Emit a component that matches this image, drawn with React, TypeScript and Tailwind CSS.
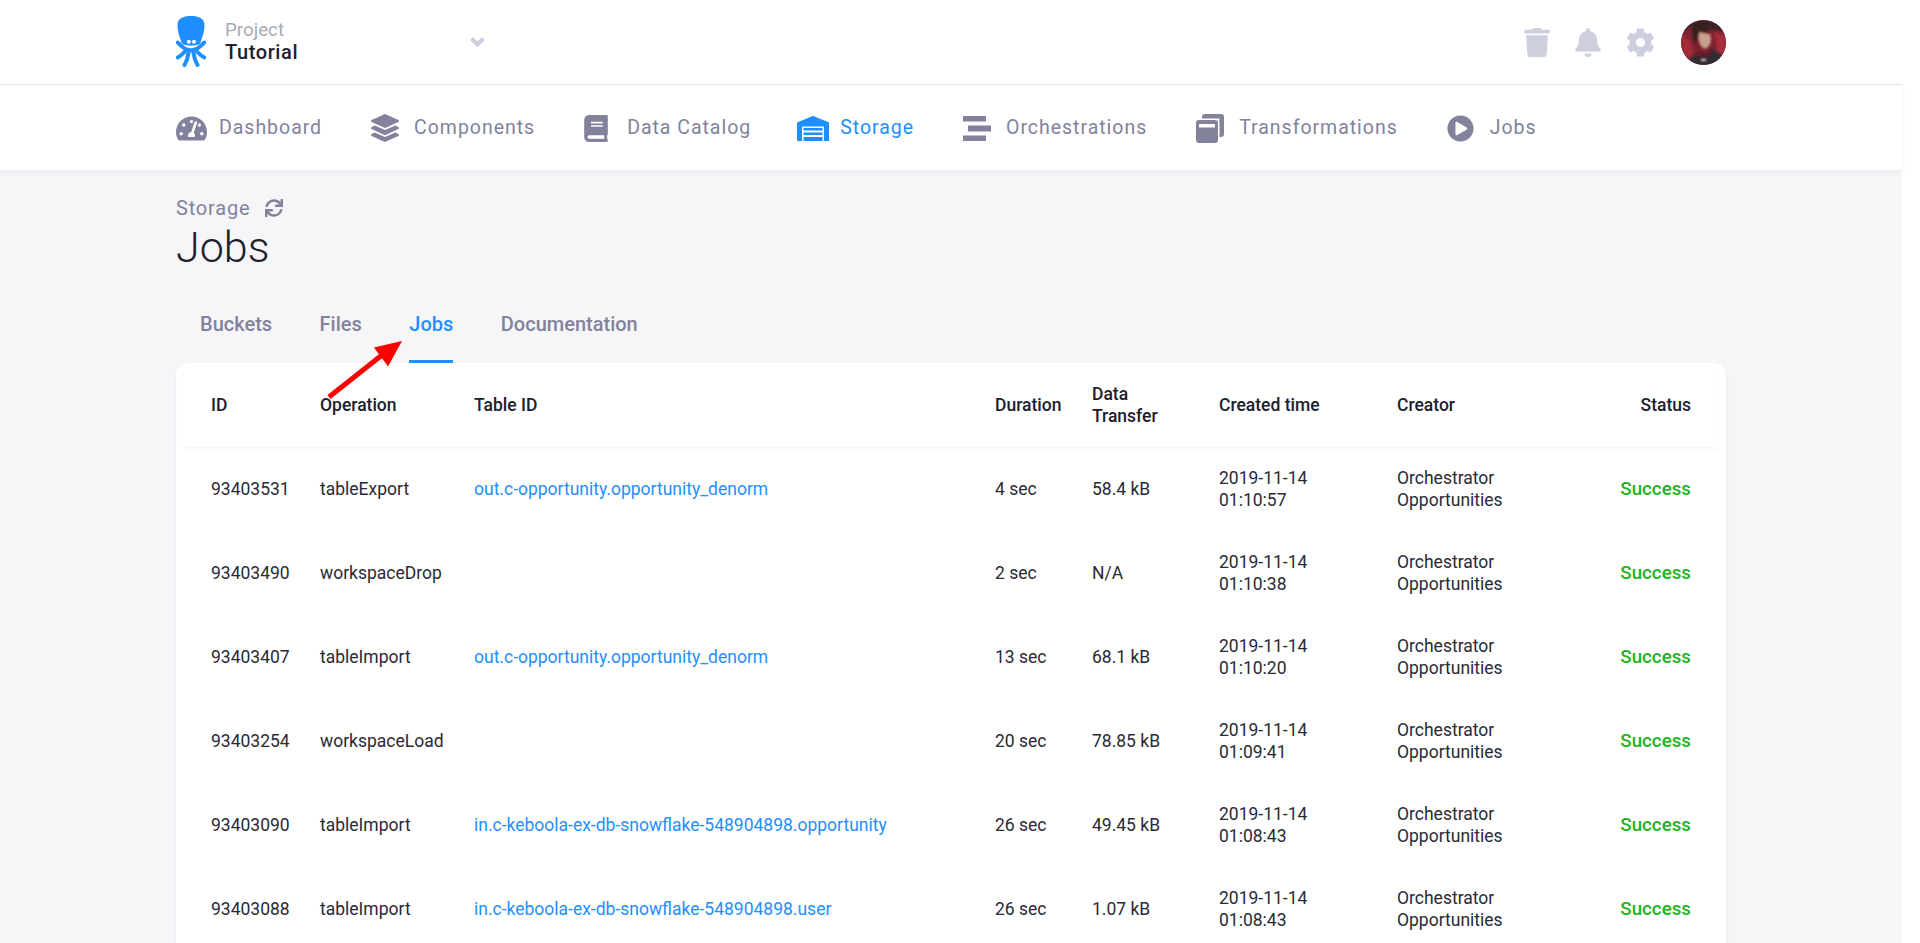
import { FaBell, FaBook, FaCog, FaLayerGroup, FaPlayCircle, FaSync, FaTachometerAlt, FaTrash } from "react-icons/fa";

const jobs = [
  { id: "93403531", op: "tableExport", table: "out.c-opportunity.opportunity_denorm", dur: "4 sec", size: "58.4 kB", time: "01:10:57" },
  { id: "93403490", op: "workspaceDrop", table: "", dur: "2 sec", size: "N/A", time: "01:10:38" },
  { id: "93403407", op: "tableImport", table: "out.c-opportunity.opportunity_denorm", dur: "13 sec", size: "68.1 kB", time: "01:10:20" },
  { id: "93403254", op: "workspaceLoad", table: "", dur: "20 sec", size: "78.85 kB", time: "01:09:41" },
  { id: "93403090", op: "tableImport", table: "in.c-keboola-ex-db-snowflake-548904898.opportunity", dur: "26 sec", size: "49.45 kB", time: "01:08:43" },
  { id: "93403088", op: "tableImport", table: "in.c-keboola-ex-db-snowflake-548904898.user", dur: "26 sec", size: "1.07 kB", time: "01:08:43" },
];

function Logo() {
  return (
    <svg viewBox="0 0 30 51" className="mb-[2px] h-[51px] w-[30px] text-[#1f8fff]" fill="currentColor">
      <path d="M1.500 9C1.500 2.500 7 0 15 0s13.500 2.500 13.500 9c0 8-3 13-4 18-2 3.500-17 3.500-19 0-1-5-4-10-4-18z" />
      <circle cx="12.800" cy="25.800" r="2" fill="#fff" />
      <circle cx="18" cy="25.800" r="2" fill="#fff" />
      <g fill="none" stroke="currentColor" strokeLinecap="round">
        <path d="M1.800 26.500Q15 42 28.200 26.500" strokeWidth="4" />
        <path d="M9 35.500Q5.500 39.500 1.800 41.500M21 35.500Q24.500 39.500 28.200 41.500" strokeWidth="4" />
        <path d="M12.500 37Q11.500 44 8.500 49M17.500 37Q18.500 44 21.500 49" strokeWidth="4" />
      </g>
    </svg>
  );
}

function StorageIcon() {
  return (
    <svg viewBox="0 0 32 25" className="h-[25px] w-[32px]" fill="#1f8fff">
      <path d="M0 6.500 15 .3a3 3 0 0 1 2 0L32 6.500V25H0z" />
      <path d="M5 10.500h22V25H5z" fill="#fff" />
      <path d="M6.500 12h19v2.500h-19zM6.500 16.500h19v2.500h-19zM6.500 21h19v4h-19z" />
    </svg>
  );
}

function OrchestrationsIcon() {
  return (
    <svg viewBox="0 0 28 25" className="h-[25px] w-[28px]" fill="#82829c">
      <path d="M0 0h23v5.500H0zM5 9.500h23v6H5zM0 19.500h23V25H0z" />
    </svg>
  );
}

function TransformationsIcon() {
  return (
    <svg viewBox="0 0 28 29" className="h-[29px] w-[28px]" fill="#82829c">
      <path d="M6 3a3 3 0 0 1 3-3h16a3 3 0 0 1 3 3v17a3 3 0 0 1-3 3h-1.500V4.500H6z" />
      <path d="M0 9a3 3 0 0 1 3-3h16a3 3 0 0 1 3 3v17a3 3 0 0 1-3 3H3a3 3 0 0 1-3-3z" />
      <path d="M3 10h16v3.500H3z" fill="#fff" />
    </svg>
  );
}

function ChevronIcon() {
  return (
    <svg viewBox="0 0 15 10" className="h-[10px] w-[15px]" fill="none" stroke="#cdcede" strokeWidth="4">
      <path d="M1.500 1.500 7.500 7.500 13.500 1.500" />
    </svg>
  );
}

function Avatar() {
  return (
    <div className="h-[45px] w-[45px] overflow-hidden rounded-full bg-[#6e1c28]">
      <svg viewBox="0 0 45 45" className="h-[45px] w-[45px] blur-[0.8px]">
        <rect width="45" height="45" fill="#7e2230" />
        <path d="M0 0h45v10H30L16 4 0 12z" fill="#3a2226" />
        <path d="M33 12l12 4v17H37z" fill="#a82c3c" />
        <path d="M0 15l9 4 5 19H0z" fill="#a02a38" />
        <path d="M11 7c4-4 13-4 15 1l3 5-10-2-3 7-1 7-3-6z" fill="#33211d" />
        <path d="M18 12l11 2c2 6 1 12-5 15-5-2-8-9-6-17z" fill="#c8a08e" />
        <path d="M6 45l5-9 9-4 4 2 7-5 8 5 4 11z" fill="#2e2e34" />
        <path d="M15 32l8 3 7-4 1 3-8 4-8-2z" fill="#6e1a26" />
        <path d="M20 39h5v2h-5z" fill="#d8d8dc" />
      </svg>
    </div>
  );
}

const navItems = [
  { label: "Dashboard", icon: <FaTachometerAlt className="h-[31px] w-[31px]" />, extra: "" },
  { label: "Components", icon: <FaLayerGroup className="h-[28px] w-[28px]" />, extra: "" },
  { label: "Data Catalog", icon: <FaBook className="h-[27px] w-[24px]" />, extra: "" },
  { label: "Storage", icon: <StorageIcon />, active: true, extra: "-ml-[3px]" },
  { label: "Orchestrations", icon: <OrchestrationsIcon />, extra: "" },
  { label: "Transformations", icon: <TransformationsIcon />, extra: "" },
  { label: "Jobs", icon: <FaPlayCircle className="h-[27px] w-[27px]" />, extra: "" },
];

const tabs = ["Buckets", "Files", "Jobs", "Documentation"];

const gridCols = "grid grid-cols-[109px_154px_521px_97px_127px_178px_1fr_80px] items-center pl-[27px] pr-[27px]";

export default function App() {
  return (
    <div className="relative h-screen overflow-hidden bg-white font-['Roboto',sans-serif] text-[#20202c]">
      <div className="h-full w-[1902px] bg-[#f6f6f9]">
        {/* Top bar */}
        <header className="h-[85px] border-b border-[#e3e8f2] bg-white">
          <div className="mx-auto flex h-full w-[1550px] items-center">
            <Logo />
            <div className="ml-[19px] w-[245px] pb-[2px]">
              <div className="text-[18.750px] leading-[22px] text-[#aaaab6]">Project</div>
              <div className="text-[20px] leading-[23px] font-medium tracking-[0.03em] text-[#20202c]">Tutorial</div>
            </div>
            <ChevronIcon />
            <div className="ml-auto flex items-center text-[#cdcede]">
              <FaTrash className="h-[29px] w-[26px]" />
              <FaBell className="ml-[25px] h-[29px] w-[26px]" />
              <FaCog className="ml-[25px] h-[29px] w-[29px]" />
              <div className="ml-[26px]"><Avatar /></div>
            </div>
          </div>
        </header>

        {/* Main nav */}
        <nav className="h-[85px] bg-white shadow-[0_2px_6px_rgba(60,60,90,0.05)]">
          <div className="mx-auto flex h-full w-[1550px] items-center gap-[49px] pt-[1px]">
            {navItems.map((item) => (
              <div key={item.label} className={`flex items-center text-[19.500px] tracking-[0.05em] ${item.extra} ${item.active ? "text-[#1f8fff]" : "text-[#82829c]"}`}>
                <div className="flex w-[43px] items-center">{item.icon}</div>
                <span>{item.label}</span>
              </div>
            ))}
          </div>
        </nav>

        <main className="mx-auto w-[1550px]">
          <div className="mt-[26px] flex items-center gap-[15px] text-[20px] leading-[24px] tracking-[0.04em] text-[#82829c]">
            Storage
            <FaSync className="h-[18px] w-[18px]" />
          </div>
          <h1 className="mt-[2px] text-[43px] leading-[50px] font-light text-[#20202c]">Jobs</h1>

          <div className="mt-[27px] flex h-[64px] gap-[47.500px] pl-[24px]">
            {tabs.map((tab) => (
              <div key={tab} className={`border-b-[3px] pt-[13px] text-[20px] leading-[24px] font-medium ${tab === "Jobs" ? "border-[#1f8fff] text-[#1f8fff]" : "border-transparent text-[#82829c]"}`}>
                {tab}
              </div>
            ))}
          </div>

          {/* Jobs table */}
          <div className="rounded-t-[12px] bg-white px-[8px] text-[17.500px] leading-[22px] shadow-[0_1px_4px_rgba(60,60,90,0.04)]">
            <div className={`${gridCols} h-[84px] font-medium shadow-[0_2px_3px_rgba(60,60,90,0.04)]`}>
              <div>ID</div>
              <div>Operation</div>
              <div>Table ID</div>
              <div>Duration</div>
              <div>Data<br />Transfer</div>
              <div>Created time</div>
              <div>Creator</div>
              <div className="text-right">Status</div>
            </div>
            {jobs.map((job) => (
              <div key={job.id} className={`${gridCols} h-[84px] text-[#2a2a36]`}>
                <div>{job.id}</div>
                <div>{job.op}</div>
                <div className="text-[#1f8fff]">{job.table}</div>
                <div>{job.dur}</div>
                <div>{job.size}</div>
                <div>2019-11-14<br />{job.time}</div>
                <div>Orchestrator<br />Opportunities</div>
                <div className="text-right text-[18.750px] font-medium text-[#21b41e]">Success</div>
              </div>
            ))}
          </div>
        </main>
      </div>

      {/* Annotation arrow */}
      <svg className="absolute top-[335px] left-[323px] h-[70px] w-[85px]" viewBox="0 0 85 70">
        <path d="M6 62 59 20" stroke="#ff0000" strokeWidth="5" fill="none" />
        <path d="M79 6 51 12.500 65 31.500z" fill="#ff0000" />
      </svg>
    </div>
  );
}
